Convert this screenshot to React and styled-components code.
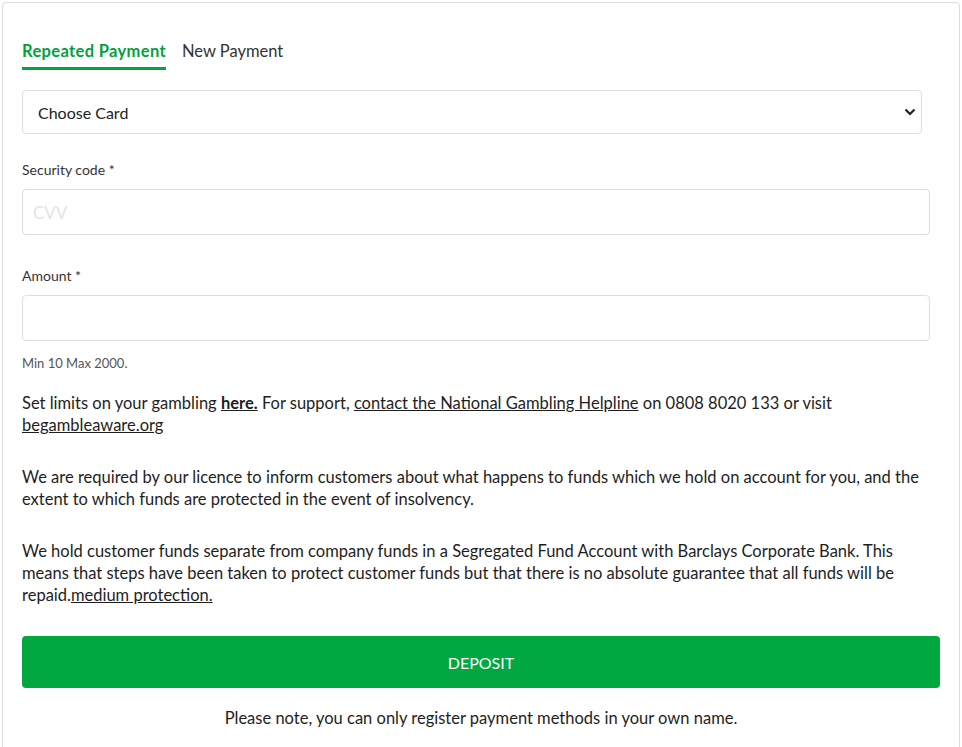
import React, { useState } from "react";
import styled, { createGlobalStyle } from "styled-components";

const Global = createGlobalStyle`
  html, body { margin: 0; padding: 0; background: #fff; }
  body { font-family: Lato, "Noto Sans", sans-serif; color: #222; }
  * { box-sizing: border-box; }
`;

const Page = styled.div`
  padding: 2px 2px 0 2px;
`;

const Card = styled.div`
  border: 1px solid #dcdcdc;
  border-radius: 4px;
  background: #fff;
  padding: 37px 19px 40px 19px;
  min-height: 760px;
`;

const Tabs = styled.div`
  display: flex;
  gap: 16px;
`;

const Tab = styled.button`
  background: none;
  border: none;
  padding: 0 0 5px 0;
  margin: 0;
  font-family: inherit;
  font-size: 16.5px;
  line-height: 22px;
  cursor: pointer;
  font-weight: ${(p) => (p.$active ? 700 : 400)};
  letter-spacing: ${(p) => (p.$active ? "0.35px" : "0")};
  color: ${(p) => (p.$active ? "#00a13b" : "#333")};
  border-bottom: 3px solid ${(p) => (p.$active ? "#00a63f" : "transparent")};
`;

const SelectWrap = styled.div`
  position: relative;
  width: 900px;
  margin-top: 20px;
`;

const Select = styled.select`
  appearance: none;
  -webkit-appearance: none;
  width: 100%;
  height: 44px;
  border: 1px solid #dedede;
  border-radius: 4px;
  background: #fff;
  padding: 0 40px 0 15px;
  font-family: inherit;
  font-size: 16px;
  color: #222;
`;

const Chevron = styled.svg`
  position: absolute;
  right: 6px;
  top: 17px;
  pointer-events: none;
`;

const Label = styled.label`
  display: block;
  font-size: 14px;
  line-height: 18px;
  color: #333;
  margin-top: ${(p) => p.$top}px;
  margin-bottom: 10px;
`;

const Input = styled.input`
  display: block;
  width: 908px;
  height: 46px;
  border: 1px solid #dedede;
  border-radius: 4px;
  padding: 0 10px;
  font-family: inherit;
  font-size: 17px;
  color: #222;
  outline: none;
  &::placeholder { color: #e4e4e4; }
`;

const Hint = styled.div`
  font-size: 13px;
  line-height: 16px;
  color: #555;
  margin-top: 14px;
`;

const Para = styled.p`
  font-size: 16.5px;
  line-height: 22px;
  margin: ${(p) => p.$top}px 0 0 0;
  color: #1e1e1e;
`;

const Link = styled.a`
  color: inherit;
  text-decoration: underline;
  font-weight: ${(p) => (p.$bold ? 700 : 400)};
`;

const Button = styled.button`
  display: block;
  width: 918px;
  height: 52px;
  margin-top: 30px;
  border: none;
  border-radius: 4px;
  background: #00a83f;
  color: #fff;
  font-family: inherit;
  font-size: 16px;
  cursor: pointer;
`;

const Note = styled.div`
  text-align: center;
  width: 918px;
  margin-top: 19px;
  font-size: 16.5px;
  line-height: 22px;
  color: #1e1e1e;
`;

export default function App() {
  const [tab, setTab] = useState(0);
  return (
    <Page>
      <Global />
      <Card>
        <Tabs>
          <Tab $active={tab === 0} onClick={() => setTab(0)}>Repeated Payment</Tab>
          <Tab $active={tab === 1} onClick={() => setTab(1)}>New Payment</Tab>
        </Tabs>
        <SelectWrap>
          <Select defaultValue="">
            <option value="">Choose Card</option>
          </Select>
          <Chevron width="12" height="10" viewBox="0 0 12 10">
            <path d="M1.5 2.5 L6 7 L10.5 2.5" fill="none" stroke="#222" strokeWidth="2.2" />
          </Chevron>
        </SelectWrap>
        <Label $top={27}>Security code *</Label>
        <Input placeholder="CVV" />
        <Label $top={32}>Amount *</Label>
        <Input />
        <Hint>Min 10 Max 2000.</Hint>
        <Para $top={21}>
          Set limits on your gambling <Link $bold href="#">here.</Link> For support,{" "}
          <Link href="#">contact the National Gambling Helpline</Link> on 0808 8020 133 or visit{" "}
          <Link href="#">begambleaware.org</Link>
        </Para>
        <Para $top={30}>
          We are required by our licence to inform customers about what happens to funds which we hold on
          account for you, and the extent to which funds are protected in the event of insolvency.
        </Para>
        <Para $top={30}>
          We hold customer funds separate from company funds in a Segregated Fund Account with Barclays
          Corporate Bank. This means that steps have been taken to protect customer funds but that there is
          no absolute guarantee that all funds will be repaid.<Link href="#">medium protection.</Link>
        </Para>
        <Button>DEPOSIT</Button>
        <Note>Please note, you can only register payment methods in your own name.</Note>
      </Card>
    </Page>
  );
}
